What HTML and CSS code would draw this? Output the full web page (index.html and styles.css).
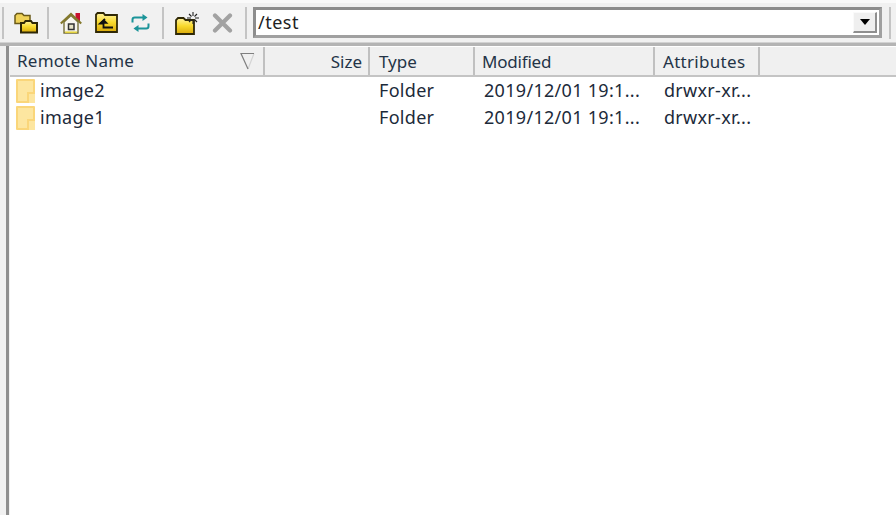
FILE: index.html
```html
<!DOCTYPE html>
<html lang="en">
<head>
<meta charset="utf-8">
<title>Remote files</title>
<link rel="stylesheet" href="styles.css">
</head>
<body>
<svg class="defs" width="0" height="0" aria-hidden="true">
  <defs>
    <linearGradient id="gold" x1="0" y1="0" x2="0" y2="1">
      <stop offset="0" stop-color="#fff3a0"/>
      <stop offset="0.5" stop-color="#f8d92c"/>
      <stop offset="1" stop-color="#d9a90c"/>
    </linearGradient>
  </defs>
</svg>
<div class="toolbar">
  <span class="sep sep-first"></span>
  <svg class="ico ico-a" width="24" height="22" viewBox="0 0 24 22">
    <path d="M1 3.500 3 1.500h5l2 2h6v8H1z" fill="#efd258" stroke="#6a5a18" stroke-width="1.500"/>
    <path d="M7 11h3l1.500-2H17l1.500 2H23v9.500H7z" fill="url(#gold)" stroke="#2f2806" stroke-width="2"/>
  </svg>
  <span class="sep"></span>
  <svg class="ico ico-b" width="22" height="22" viewBox="0 0 22 22">
    <path d="M15.500 1H20v8h-4.500z" fill="#c8102e"/>
    <path d="M4 10v11h14V10L11 3.500z" fill="#f8f6ee" stroke="#77703a" stroke-width="1.400"/>
    <path d="M.8 11.500 11 2l10.200 9.500" fill="none" stroke="#84792c" stroke-width="2.200"/>
    <path d="M8.500 12h5.500v5.500H8.500z" fill="#e9e5c8" stroke="#333" stroke-width="1.500"/>
    <path d="M5 20.200h12" stroke="#e6d53c" stroke-width="1.500"/>
  </svg>
  <svg class="ico ico-c" width="23" height="21" viewBox="0 0 23 21">
    <path d="M1 4V2.500L2.500 1h6L10 3h12v17H1z" fill="url(#gold)" stroke="#2f2806" stroke-width="1.800"/>
    <path d="M10 7 5 11.500h3.500V15.500H18" fill="none" stroke="#111" stroke-width="1.800"/>
    <path d="M4.500 11.800 9 7.200l4.500 4.600z" fill="#111"/>
  </svg>
  <svg class="ico ico-d" width="19" height="20" viewBox="0 0 19 20">
    <path d="M1.500 9.500V6.800Q1.500 4.500 3.800 4.500H12" fill="none" stroke="#1b9499" stroke-width="2"/>
    <path d="M11.500 1 16.500 4.500 11.500 8z" fill="#1b9499"/>
    <path d="M17.500 10.500v2.700q0 2.300-2.300 2.300H7" fill="none" stroke="#1b9499" stroke-width="2"/>
    <path d="M7.500 12 2.500 15.500 7.500 19z" fill="#1b9499"/>
  </svg>
  <span class="sep"></span>
  <svg class="ico ico-e" width="24" height="24" viewBox="0 0 24 24">
    <path d="M1 11V9l2-2h5.500l2 2H19v14H1z" fill="url(#gold)" stroke="#2f2806" stroke-width="1.800"/>
    <path d="M18 1v4M18 9v4M12 7h4M20 7h4M14 3l2.500 2.500M22 3l-2.500 2.500M14 11l2.500-2.500M22 11l-2.500-2.500" stroke="#222" stroke-width="1.100"/>
  </svg>
  <svg class="ico ico-f" width="21" height="20" viewBox="0 0 21 20">
    <path d="M3 2.500 18 17.500M18 2.500 3 17.500" stroke="#a2a2a2" stroke-width="4.200" stroke-linecap="round"/>
  </svg>
  <span class="sep"></span>
  <div class="combo">
    <span class="combo-text">/test</span>
    <span class="combo-btn"><span class="combo-arrow"></span></span>
  </div>
  <span class="sep"></span>
</div>
<div class="rule"></div>
<div class="panel">
  <div class="edge"></div>
  <div class="list">
    <div class="row head">
      <div class="cell c-name"><span>Remote Name</span>
        <svg class="sort" width="15" height="18" viewBox="0 0 15 18"><path d="M8 17 14 1.500" stroke="#d4d4d4" stroke-width="1.200"/><path d="M14 1.500H1L8 17" fill="none" stroke="#7f7f7f" stroke-width="1.200"/></svg>
      </div>
      <div class="cell c-size">Size</div>
      <div class="cell c-type">Type</div>
      <div class="cell c-mod">Modified</div>
      <div class="cell c-attr">Attributes</div>
    </div>
    <div class="row item">
      <div class="cell c-name"><span class="folder"></span>image2</div>
      <div class="cell c-size"></div>
      <div class="cell c-type">Folder</div>
      <div class="cell c-mod">2019/12/01 19:1...</div>
      <div class="cell c-attr">drwxr-xr...</div>
    </div>
    <div class="row item">
      <div class="cell c-name"><span class="folder"></span>image1</div>
      <div class="cell c-size"></div>
      <div class="cell c-type">Folder</div>
      <div class="cell c-mod">2019/12/01 19:1...</div>
      <div class="cell c-attr">drwxr-xr...</div>
    </div>
  </div>
</div>
</body>
</html>
```
FILE: styles.css
```css
* { box-sizing: border-box; }
html, body { height: 100%; }
body {
  margin: 0;
  background: #fff;
  overflow: hidden;
  font-family: "Noto Sans", "Open Sans", sans-serif;
  font-size: 17px;
  color: #1c2a3a;
}
.defs { position: absolute; }
.toolbar {
  height: 42px;
  background: #f1f1f1;
  border-top: 3px solid #fafafa;
  display: flex;
  align-items: center;
  padding-left: 2px;
}
.sep {
  width: 2px;
  height: 32px;
  background: #c4c4c4;
  flex: none;
}
.sep-first { margin-right: 10px; }
.ico { flex: none; display: block; }
.ico-a { margin-right: 9px; }
.ico-b { margin-left: 11px; }
.ico-c { margin-left: 13px; }
.ico-d { margin-left: 13px; margin-right: 12px; }
.ico-e { margin-left: 11px; }
.ico-f { margin-left: 13px; margin-right: 12px; }
.combo {
  width: 629px;
  height: 31px;
  margin: 0 7px 0 6px;
  flex: none;
  display: flex;
  background: #fff;
  border: 3px solid #8d8d8d;
  border-right-color: #a0a0a0;
  border-bottom-color: #a0a0a0;
  padding: 2px;
}
.combo-text {
  flex: 1;
  line-height: 21px;
  color: #222;
  font-size: 18px;
  letter-spacing: .5px;
}
.combo-btn {
  width: 24px;
  flex: none;
  background: #efefef;
  border-right: 2px solid #8f8f8f;
  border-bottom: 2px solid #8f8f8f;
  border-left: 1px solid #fafafa;
  border-top: 1px solid #fafafa;
  display: flex;
  align-items: center;
  justify-content: center;
}
.combo-arrow {
  width: 0;
  height: 0;
  border-left: 5px solid transparent;
  border-right: 5px solid transparent;
  border-top: 6px solid #000;
}
.rule {
  height: 4px;
  background: #b4b4b4;
  border-top: 1px solid #d2d2d2;
}
.panel {
  display: flex;
  height: 469px;
  background: #f1f1f1;
}
.edge {
  width: 9px;
  background: linear-gradient(to right, #f1f1f1 0 6px, #8f8f8f 6px 9px);
  flex: none;
}
.list {
  flex: 1;
  margin-left: 1px;
  background: #fff;
}
.row { display: flex; }
.head {
  height: 31px;
  background: #f0f0f0;
  border-top: 1px solid #fff;
  border-bottom: 2px solid #c4c4c4;
}
.head .cell {
  border-right: 2px solid #c0c0c0;
  line-height: 30px;
  color: #243447;
}
.item { height: 27px; line-height: 27px; font-size: 18px; letter-spacing: .3px; }
.cell {
  flex: none;
  white-space: nowrap;
  overflow: hidden;
  padding-left: 7px;
}
.c-name { width: 255px; display: flex; align-items: center; justify-content: space-between; padding-right: 8px; }
.c-size { width: 105px; text-align: right; padding-right: 6px; }
.c-type { width: 105px; padding-left: 9px; }
.c-mod { width: 180px; padding-left: 7px; }
.c-attr { width: 105px; padding-left: 8px; }
.head .c-name span { letter-spacing: .25px; }
.head .c-mod { letter-spacing: -.2px; }
.head .c-attr { letter-spacing: .3px; }
.item .c-name { justify-content: flex-start; padding-left: 6px; }
.item .c-mod { padding-left: 9px; }
.item .c-attr { padding-left: 9px; }
.folder {
  width: 19px;
  height: 24px;
  margin-right: 5px;
  background: #fde6a0;
  border: 2px solid #fad67a;
  border-radius: 1px;
  flex: none;
  position: relative;
}
.folder::after {
  content: "";
  position: absolute;
  right: -2px;
  bottom: -2px;
  width: 6px;
  height: 9px;
  border: 2px solid #fad67a;
  border-right: 0;
  border-bottom: 0;
  background: #fde6a0;
}
.sort { flex: none; }
```
